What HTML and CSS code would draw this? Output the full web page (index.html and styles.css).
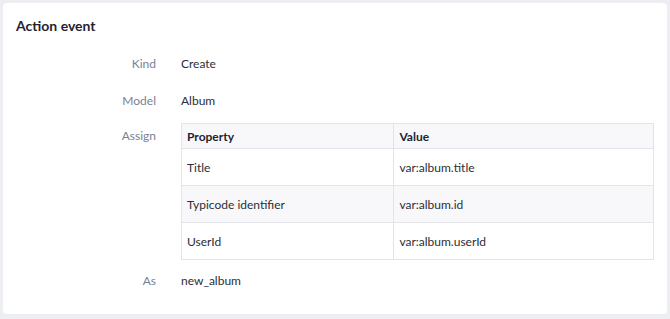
FILE: index.html
```html
<!DOCTYPE html>
<html lang="en">
    <head>
        <meta charset="UTF-8" />
        <title>Action event</title>
        <link rel="stylesheet" href="styles.css">
    </head>
    <body>
        <div class="card">
            <h3>Action event</h3>
            <div class="fields">
                <div class="field">
                    <span class="label">Kind</span>
                    <span class="value">Create</span>
                </div>
                <div class="field">
                    <span class="label">Model</span>
                    <span class="value">Album</span>
                </div>
                <div class="field assign">
                    <span class="label">Assign</span>
                    <table>
                        <thead>
                            <tr>
                                <th class="prop">Property</th>
                                <th>Value</th>
                            </tr>
                        </thead>
                        <tbody>
                            <tr>
                                <td>Title</td>
                                <td>var:album.title</td>
                            </tr>
                            <tr>
                                <td>Typicode identifier</td>
                                <td>var:album.id</td>
                            </tr>
                            <tr>
                                <td>UserId</td>
                                <td>var:album.userId</td>
                            </tr>
                        </tbody>
                    </table>
                </div>
                <div class="field">
                    <span class="label">As</span>
                    <span class="value">new_album</span>
                </div>
            </div>
        </div>
    </body>
</html>
```

FILE: styles.css
```css
body {
    margin: 0;
    padding: 3px;
    background: #eceef2;
    font-family: Lato, "Liberation Sans", sans-serif;
    font-size: 12px;
    color: #2b2e38;
}
h3 {
    margin: 0 0 9px;
    font-size: 14px;
    line-height: 20px;
    font-weight: bold;
    color: #1f2330;
}
.card {
    background: #fff;
    border-radius: 4px;
    padding: 13px 13px 15px;
}
.field {
    display: flex;
    padding: 10px 0;
    line-height: 17px;
}
.field .label {
    width: 140px;
    margin-right: 25px;
    text-align: right;
    color: #7b8091;
}
.field.assign {
    padding: 4px 0 2px;
}
.field.assign .label {
    line-height: 26px;
}
table {
    flex: 1;
    border-collapse: collapse;
    border: 1px solid #e3e4e9;
}
th,
td {
    text-align: left;
    padding: 0 5px;
    border: 1px solid #e3e4e9;
}
th {
    height: 24px;
    background: #f8f8fa;
    font-weight: bold;
    color: #1f2330;
}
th.prop {
    width: 45%;
}
td {
    height: 36px;
}
tbody tr:nth-child(2) {
    background: #f8f8fa;
}
```
